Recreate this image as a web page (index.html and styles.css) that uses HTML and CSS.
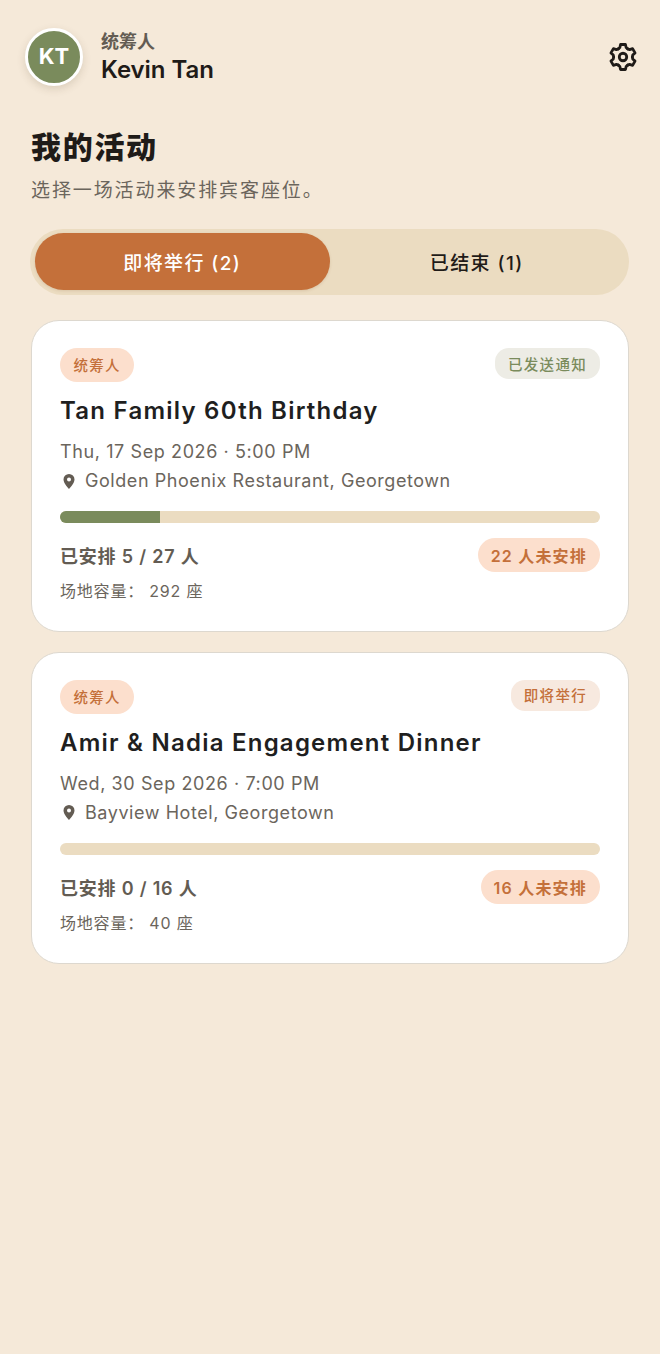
FILE: index.html
```html
<!DOCTYPE html>
<html lang="zh-CN">
<head>
<meta charset="utf-8">
<title>我的活动</title>
<link rel="stylesheet" href="styles.css">
</head>
<body>
<main class="page">
  <header class="top">
    <div class="who">
      <div class="avatar">KT</div>
      <div class="names">
        <div class="role">统筹人</div>
        <div class="name">Kevin Tan</div>
      </div>
    </div>
    <svg class="gear" viewBox="0 0 24 24" fill="none" stroke="#1f1b18" stroke-width="2.400" stroke-linejoin="round" stroke-linecap="round">
      <g transform="translate(12 12)">
        <path id="tooth" d="M-4-6.930L-2.700-8.100-2.100-10.700H2.100L2.700-8.100 4-6.930"/>
        <use href="#tooth" transform="rotate(60)"/>
        <use href="#tooth" transform="rotate(120)"/>
        <use href="#tooth" transform="rotate(180)"/>
        <use href="#tooth" transform="rotate(240)"/>
        <use href="#tooth" transform="rotate(300)"/>
        <circle r="3.200"/>
      </g>
    </svg>
  </header>

  <section class="intro">
    <h1 class="title">我的活动</h1>
    <p class="sub">选择一场活动来安排宾客座位。</p>
  </section>

  <nav class="tabs">
    <div class="tab tab-on">即将举行 (2)</div>
    <div class="tab">已结束 (1)</div>
  </nav>

  <section class="list">
    <article class="card">
      <div class="row">
        <span class="chip chip-role">统筹人</span>
        <span class="chip chip-sent">已发送通知</span>
      </div>
      <h2 class="event">Tan Family 60th Birthday</h2>
      <div class="when">Thu, 17 Sep 2026 · 5:00 PM</div>
      <div class="where">
        <svg class="pin" viewBox="0 0 12 15"><path fill-rule="evenodd" d="M6 0a5.500 5.500 0 0 0-5.500 5.500C.5 9.500 6 15 6 15s5.500-5.500 5.500-9.500A5.500 5.500 0 0 0 6 0zm0 7.500a2 2 0 1 1 0-4 2 2 0 0 1 0 4z"/></svg>
        <span>Golden Phoenix Restaurant, Georgetown</span>
      </div>
      <div class="bar"><div class="fill" style="width:18.500%"></div></div>
      <div class="row row-stat">
        <span class="placed">已安排 5 / 27 人</span>
        <span class="chip-left">22 人未安排</span>
      </div>
      <div class="cap">场地容量： 292 座</div>
    </article>

    <article class="card">
      <div class="row">
        <span class="chip chip-role">统筹人</span>
        <span class="chip chip-soon">即将举行</span>
      </div>
      <h2 class="event">Amir &amp; Nadia Engagement Dinner</h2>
      <div class="when">Wed, 30 Sep 2026 · 7:00 PM</div>
      <div class="where">
        <svg class="pin" viewBox="0 0 12 15"><path fill-rule="evenodd" d="M6 0a5.500 5.500 0 0 0-5.500 5.500C.5 9.500 6 15 6 15s5.500-5.500 5.500-9.500A5.500 5.500 0 0 0 6 0zm0 7.500a2 2 0 1 1 0-4 2 2 0 0 1 0 4z"/></svg>
        <span>Bayview Hotel, Georgetown</span>
      </div>
      <div class="bar"><div class="fill" style="width:0%"></div></div>
      <div class="row row-stat">
        <span class="placed">已安排 0 / 16 人</span>
        <span class="chip-left">16 人未安排</span>
      </div>
      <div class="cap">场地容量： 40 座</div>
    </article>
  </section>
</main>
</body>
</html>
```
FILE: styles.css
```css
* { box-sizing: border-box; }
html, body { margin: 0; padding: 0; }
body {
  background: #f5e9d9;
  font-family: Inter, "Noto Sans CJK SC", sans-serif;
  color: #1f1b18;
}
.page { height: 1354px; padding: 28px 31px 0; overflow: hidden; }

.top { display: flex; justify-content: space-between; align-items: center; height: 58px; margin-left: -6px; margin-right: -8px; }
.who { display: flex; align-items: center; gap: 18px; }
.avatar {
  width: 58px; height: 58px; border-radius: 50%;
  background: #7a8b5c; border: 3px solid #fff;
  box-shadow: 0 3px 8px rgba(80, 60, 30, 0.16);
  color: #fff; font-weight: 700; font-size: 22px; padding-bottom: 3px;
  display: flex; align-items: center; justify-content: center;
}
.names { margin-top: 3px; }
.role { font-size: 18px; line-height: 24px; font-weight: 700; color: #635c53; margin-top: -2px; }
.name { font-size: 24px; line-height: 30px; font-weight: 600; margin-top: 1px; letter-spacing: -0.050px; }
.gear { width: 28px; height: 28px; }

.intro { margin-top: 42px; }
.title { margin: 0; font-size: 30px; line-height: 38px; font-weight: 900; letter-spacing: 1.700px; }
.sub { margin: 11px 0 0; font-size: 19px; line-height: 28px; color: #6b655c; letter-spacing: 1.900px; }

.tabs {
  display: flex; margin: 24px 0 0 -1px; padding: 4px 5px 5px;
  height: 66px; background: #ebdcc1; border-radius: 33px;
}
.tab {
  flex: 1; display: flex; align-items: center; justify-content: center;
  font-size: 19px; font-weight: 500; letter-spacing: 1.400px; border-radius: 29px;
}
.tab-on { background: #c4703a; color: #fff; box-shadow: 0 1px 3px rgba(120, 70, 30, 0.15); }

.list { margin-top: 25px; display: flex; flex-direction: column; gap: 19.500px; }
.card {
  height: 312px; background: #fff; border: 1.5px solid #ddd8cf; border-radius: 28px;
  padding: 27px 28px 0;
}
.row { display: flex; justify-content: space-between; align-items: flex-start; }
.chip { display: inline-flex; align-items: center; font-size: 14.500px; font-weight: 500; letter-spacing: 1.300px; padding-bottom: 1px; }
.chip-role { height: 34px; padding-left: 13.500px; padding-right: 13.500px; border-radius: 17px; background: #fcdfcd; color: #c4703a; }
.chip-sent { height: 31px; padding-left: 13px; padding-right: 13px; border-radius: 14px; background: #edece5; color: #7a8b5c; }
.chip-soon { height: 31px; padding-left: 13px; padding-right: 13px; border-radius: 14px; background: #f7e9df; color: #c4703a; }
.event { margin: 12px 0 0; font-size: 24px; line-height: 34px; font-weight: 600; letter-spacing: 1.230px; color: #1f1f1f; }
.when { margin-top: 11px; font-size: 18px; line-height: 26px; color: #6b655c; letter-spacing: 0.600px; }
.where { margin-top: 3px; display: flex; align-items: center; gap: 10px; font-size: 18px; line-height: 26px; color: #6b655c; letter-spacing: 0.560px; }
.pin { width: 12px; height: 15px; fill: #635c53; margin-left: 3px; }
.bar { margin-top: 17px; height: 12px; border-radius: 6px; background: #ebdcc1; overflow: hidden; }
.fill { height: 100%; background: #7a8b5c; }
.row-stat { margin-top: 15px; align-items: center; }
.placed { font-size: 18px; font-weight: 600; color: #635c53; letter-spacing: 0.800px; }
.chip-left { height: 34px; padding: 0 13px; border-radius: 17px; background: #fcdfcd; color: #c4703a; font-size: 16px; font-weight: 600; letter-spacing: 1.200px; display: inline-flex; align-items: center; }
.cap { margin-top: 6px; font-size: 16px; line-height: 26px; color: #6b655c; letter-spacing: 0.800px; }
```
